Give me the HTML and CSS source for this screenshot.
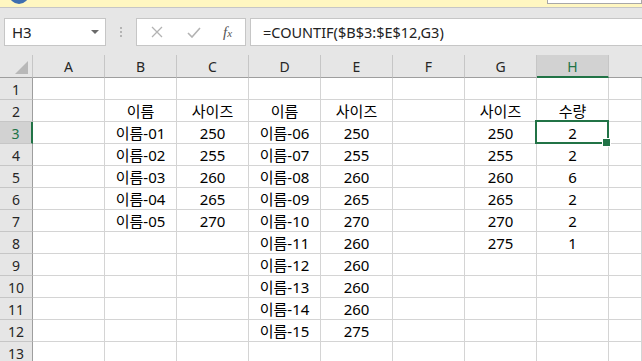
FILE: index.html
```html
<!DOCTYPE html>
<html lang="ko">
<head>
    <meta charset="UTF-8">
    <title>COUNTIF</title>
    <link rel="stylesheet" href="styles.css">
</head>
<body>
    <!-- message bar -->
    <div class="msgbar">
        <span class="msg-icon"></span>
        <span class="msg-button"></span>
    </div>

    <!-- name box + formula bar -->
    <div class="toolbar">
        <div class="namebox">
            <span>H3</span>
            <span class="caret"></span>
        </div>
        <div class="grip"><i></i><i></i><i></i></div>
        <div class="fbuttons">
            <svg width="12" height="12" viewBox="0 0 12 12"><path d="M1 1 L11 11 M11 1 L1 11" stroke="#b3b3b3" stroke-width="1.3" fill="none"/></svg>
            <svg width="14" height="11" viewBox="0 0 14 11"><path d="M1 6 L5 10 L13 1" stroke="#b3b3b3" stroke-width="1.6" fill="none"/></svg>
            <span class="fx">f<small>x</small></span>
        </div>
        <div class="formula">=COUNTIF($B$3:$E$12,G3)</div>
    </div>

    <!-- sheet -->
    <div class="sheet">
        <div class="row head">
            <div class="corner"><span class="tri"></span></div>
            <div class="ch">A</div><div class="ch">B</div><div class="ch">C</div><div class="ch">D</div>
            <div class="ch">E</div><div class="ch">F</div><div class="ch">G</div><div class="ch sel">H</div><div class="ch last"></div>
        </div>
        <div class="row">
            <div class="rh">1</div>
            <div class="c"></div><div class="c"></div><div class="c"></div><div class="c"></div>
            <div class="c"></div><div class="c"></div><div class="c"></div><div class="c"></div><div class="c"></div>
        </div>
        <div class="row">
            <div class="rh">2</div>
            <div class="c"></div><div class="c">이름</div><div class="c">사이즈</div><div class="c">이름</div>
            <div class="c">사이즈</div><div class="c"></div><div class="c">사이즈</div><div class="c">수량</div><div class="c"></div>
        </div>
        <div class="row">
            <div class="rh sel">3</div>
            <div class="c"></div><div class="c">이름-01</div><div class="c">250</div><div class="c">이름-06</div>
            <div class="c">250</div><div class="c"></div><div class="c">250</div><div class="c active">2</div><div class="c"></div>
        </div>
        <div class="row">
            <div class="rh">4</div>
            <div class="c"></div><div class="c">이름-02</div><div class="c">255</div><div class="c">이름-07</div>
            <div class="c">255</div><div class="c"></div><div class="c">255</div><div class="c">2</div><div class="c"></div>
        </div>
        <div class="row">
            <div class="rh">5</div>
            <div class="c"></div><div class="c">이름-03</div><div class="c">260</div><div class="c">이름-08</div>
            <div class="c">260</div><div class="c"></div><div class="c">260</div><div class="c">6</div><div class="c"></div>
        </div>
        <div class="row">
            <div class="rh">6</div>
            <div class="c"></div><div class="c">이름-04</div><div class="c">265</div><div class="c">이름-09</div>
            <div class="c">265</div><div class="c"></div><div class="c">265</div><div class="c">2</div><div class="c"></div>
        </div>
        <div class="row">
            <div class="rh">7</div>
            <div class="c"></div><div class="c">이름-05</div><div class="c">270</div><div class="c">이름-10</div>
            <div class="c">270</div><div class="c"></div><div class="c">270</div><div class="c">2</div><div class="c"></div>
        </div>
        <div class="row">
            <div class="rh">8</div>
            <div class="c"></div><div class="c"></div><div class="c"></div><div class="c">이름-11</div>
            <div class="c">260</div><div class="c"></div><div class="c">275</div><div class="c">1</div><div class="c"></div>
        </div>
        <div class="row">
            <div class="rh">9</div>
            <div class="c"></div><div class="c"></div><div class="c"></div><div class="c">이름-12</div>
            <div class="c">260</div><div class="c"></div><div class="c"></div><div class="c"></div><div class="c"></div>
        </div>
        <div class="row">
            <div class="rh">10</div>
            <div class="c"></div><div class="c"></div><div class="c"></div><div class="c">이름-13</div>
            <div class="c">260</div><div class="c"></div><div class="c"></div><div class="c"></div><div class="c"></div>
        </div>
        <div class="row">
            <div class="rh">11</div>
            <div class="c"></div><div class="c"></div><div class="c"></div><div class="c">이름-14</div>
            <div class="c">260</div><div class="c"></div><div class="c"></div><div class="c"></div><div class="c"></div>
        </div>
        <div class="row">
            <div class="rh">12</div>
            <div class="c"></div><div class="c"></div><div class="c"></div><div class="c">이름-15</div>
            <div class="c">275</div><div class="c"></div><div class="c"></div><div class="c"></div><div class="c"></div>
        </div>
        <div class="row">
            <div class="rh">13</div>
            <div class="c"></div><div class="c"></div><div class="c"></div><div class="c"></div>
            <div class="c"></div><div class="c"></div><div class="c"></div><div class="c"></div><div class="c"></div>
        </div>
    </div>
</body>
</html>
```

FILE: styles.css
```css
* {
    box-sizing: border-box;
}

body {
    margin: 0;
    width: 642px;
    height: 361px;
    overflow: hidden;
    background-color: #e6e6e6;
    font-family: "Noto Sans", "Noto Sans CJK KR", sans-serif;
    color: #000;
}

/* yellow message bar */
.msgbar {
    height: 8px;
    background-color: #fff7c1;
    border-bottom: 1px solid #c6c6c6;
    display: flex;
    align-items: flex-end;
    overflow: hidden;
    padding-left: 9px;
}

.msg-icon {
    width: 20px;
    height: 20px;
    margin-bottom: 3px;
    border-radius: 50%;
    background-color: #3e6fb0;
}

.msg-button {
    width: 95px;
    height: 4px;
    margin-left: auto;
    margin-bottom: 4px;
    align-self: flex-start;
    background-color: #fff;
    border: 1px solid #a8a8a8;
    border-top: none;
}

/* name box and formula bar */
.toolbar {
    display: flex;
    align-items: center;
    height: 47px;
    padding: 10px 0 9px 4px;
}

.namebox {
    width: 102px;
    height: 28px;
    background-color: #fff;
    border: 1px solid #c6c6c6;
    display: flex;
    align-items: center;
    justify-content: space-between;
    padding: 0 6px 0 7px;
    font-size: 15px;
    color: #222;
}

.caret {
    width: 0;
    height: 0;
    border-left: 4px solid transparent;
    border-right: 4px solid transparent;
    border-top: 4px solid #6a6a6a;
}

.grip {
    width: 30px;
    display: flex;
    flex-direction: column;
    align-items: center;
    gap: 2px;
}

.grip i {
    width: 2px;
    height: 2px;
    background-color: #b4b4b4;
}

.fbuttons {
    width: 110px;
    height: 28px;
    background-color: #fff;
    border: 1px solid #c6c6c6;
    display: flex;
    align-items: center;
    padding: 0 0 0 14px;
    gap: 24px;
}

.fbuttons svg {
    display: block;
}

.fx {
    font-family: "Liberation Serif", serif;
    font-style: italic;
    font-size: 15px;
    color: #555;
    margin-left: -2px;
}

.fx small {
    font-size: 11px;
}

.formula {
    flex: 1;
    height: 28px;
    margin-left: 4px;
    background-color: #fff;
    border: 1px solid #c6c6c6;
    border-right: none;
    display: flex;
    align-items: center;
    padding-left: 12px;
    font-size: 14.5px;
    color: #222;
    white-space: nowrap;
}

/* sheet grid */
.sheet {
    background-color: #fff;
}

.row {
    display: grid;
    grid-template-columns: 33px repeat(8, 72px) 1fr;
    height: 22px;
}

.row.head {
    height: 23px;
    background-color: #e6e6e6;
}

.corner {
    border-right: 1px solid #c6c6c6;
    border-bottom: 1px solid #9e9e9e;
    display: flex;
    align-items: flex-end;
    justify-content: flex-end;
    padding: 0 4px 3px 0;
}

.tri {
    width: 0;
    height: 0;
    border-left: 13px solid transparent;
    border-bottom: 13px solid #b8b8b8;
}

.ch {
    border-right: 1px solid #c6c6c6;
    border-bottom: 1px solid #9e9e9e;
    font-size: 14px;
    color: #262626;
    display: flex;
    align-items: center;
    justify-content: center;
    padding-top: 1px;
}

.ch.last {
    border-right: none;
}

.ch.sel {
    background-color: #d2d2d2;
    border-bottom: 2px solid #217346;
    color: #217346;
}

.rh {
    background-color: #e6e6e6;
    border-right: 1px solid #9e9e9e;
    border-bottom: 1px solid #c6c6c6;
    font-size: 14px;
    color: #262626;
    display: flex;
    align-items: center;
    justify-content: center;
    padding-top: 1px;
}

.rh.sel {
    background-color: #d2d2d2;
    border-right: 2px solid #217346;
    color: #217346;
}

.c {
    border-right: 1px solid #d4d4d4;
    border-bottom: 1px solid #d4d4d4;
    font-size: 15px;
    line-height: 20px;
    display: flex;
    align-items: center;
    justify-content: center;
    white-space: nowrap;
    padding-top: 1px;
}

.c.active {
    position: relative;
}

.c.active::after {
    content: "";
    position: absolute;
    top: -2px;
    left: -2px;
    right: -1px;
    bottom: -1px;
    border: 2px solid #217346;
}

.c.active::before {
    content: "";
    position: absolute;
    right: -3px;
    bottom: -4px;
    width: 7px;
    height: 7px;
    background-color: #217346;
    border: 1px solid #fff;
    z-index: 1;
}
```
